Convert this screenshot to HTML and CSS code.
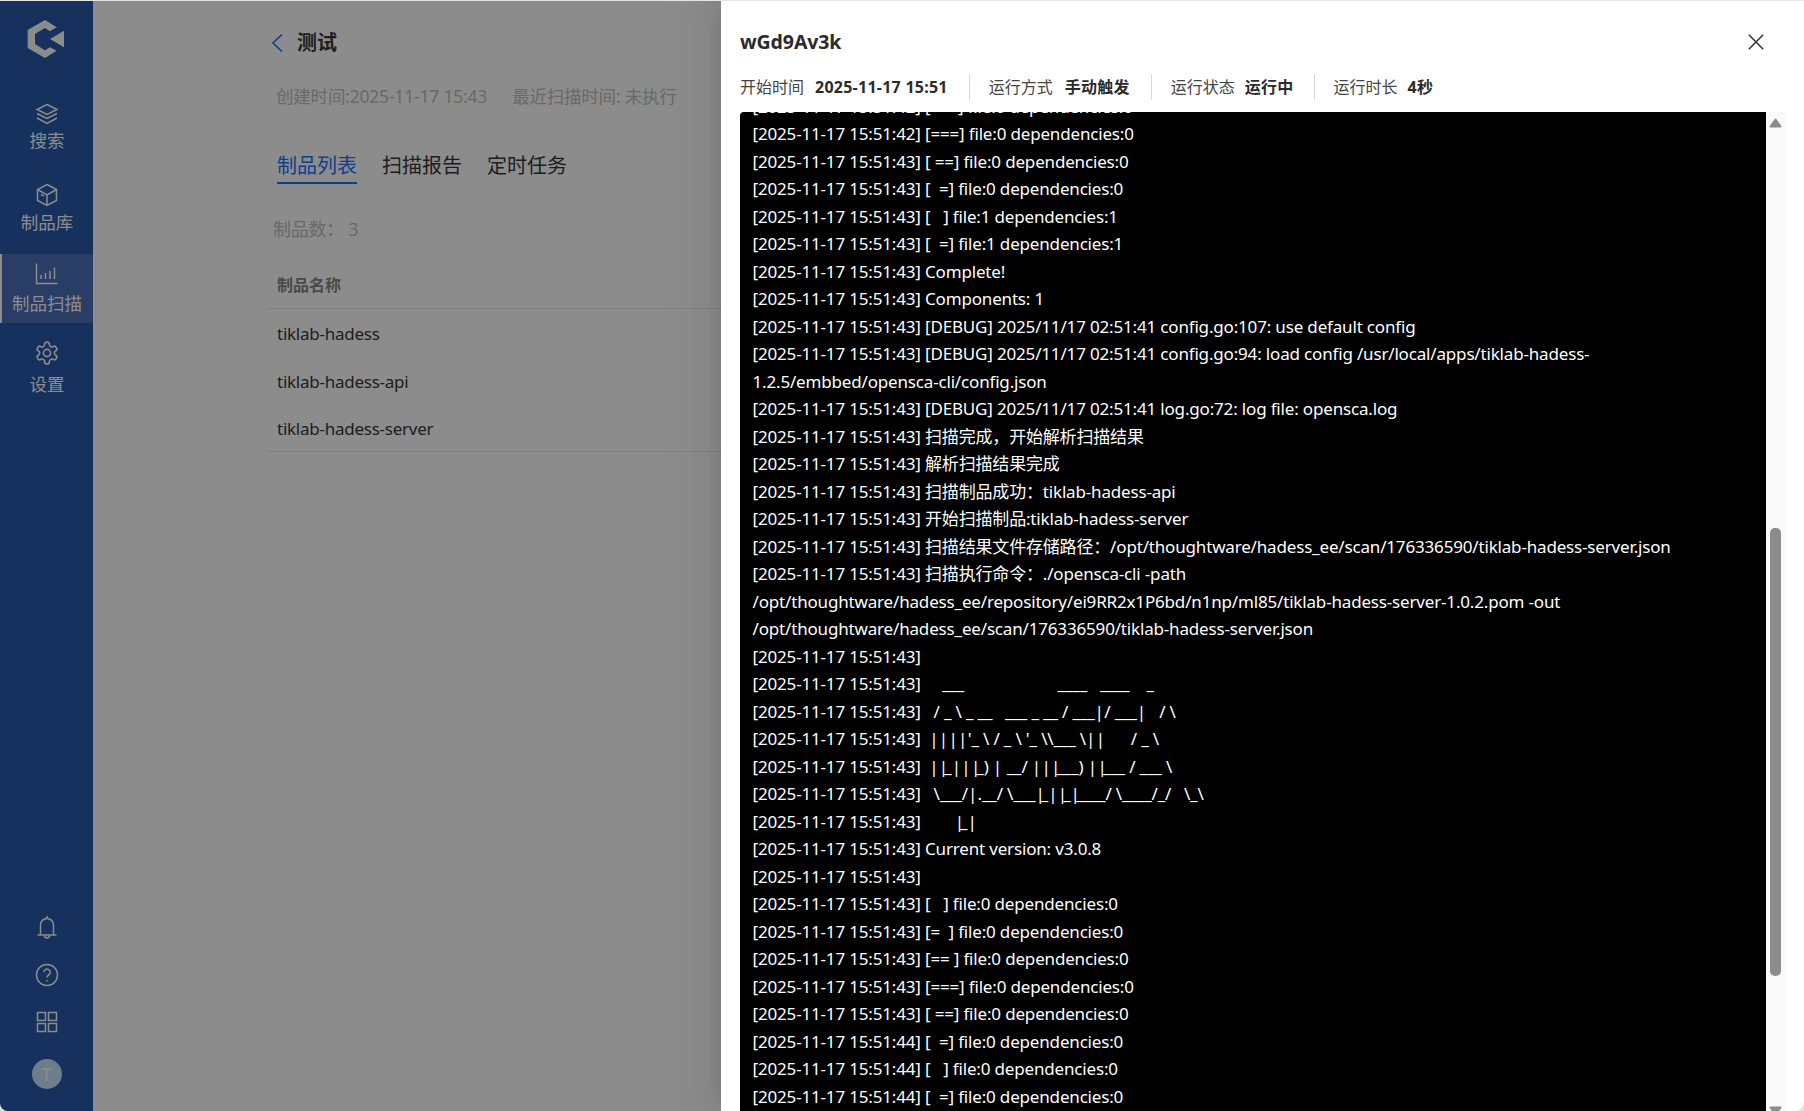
FILE: index.html
```html
<!DOCTYPE html>
<html lang="zh-CN">
<head>
<meta charset="utf-8">
<title>测试</title>
<link rel="stylesheet" href="styles.css">
</head>
<body>
<div class="app">
  <aside class="sidebar">
    <div class="logo">
      <svg viewBox="0 0 195 195" width="65" height="65"><path fill="#fff" d="M90 36 38 66v54l52 30 35-22-20-10-15 9-30-19V78l30-18 15 10 20-12z"/><path fill="#fff" d="M105 93 147 68v50z"/></svg>
    </div>
    <nav class="nav">
      <a class="nav-item nav-search">
        <svg class="ico" viewBox="0 0 24 24" width="24" height="24"><path d="M12 2.500 22 7.500 12 12.500 2 7.500z"/><path d="M2 11.500l10 5 10-5"/><path d="M2 16l10 5.500L22 16"/></svg>
        <span>搜索</span>
      </a>
      <a class="nav-item nav-lib">
        <svg class="ico" viewBox="0 0 24 24" width="24" height="24"><path d="M12 1.500 21.500 6.500v11L12 22.500 2.500 17.500v-11z"/><path d="M2.500 6.500 12 12l9.500-5.500"/><path d="M12 12v10.500"/><path d="M6 11.500l3 1.700"/></svg>
        <span>制品库</span>
      </a>
      <a class="nav-item nav-scan active">
        <svg class="ico" viewBox="0 0 24 24" width="24" height="24"><path d="M1.500 1.500v20h21"/><path d="M6 17v-4M10.500 17v-6M15 17V9M19.500 17V5.500"/></svg>
        <span>制品扫描</span>
      </a>
      <a class="nav-item nav-set">
        <svg class="ico" viewBox="0 0 24 24" width="26" height="26"><path d="M12.220 2h-.440a2 2 0 0 0-2 2v.180a2 2 0 0 1-1 1.730l-.430.250a2 2 0 0 1-2 0l-.150-.080a2 2 0 0 0-2.730.730l-.220.380a2 2 0 0 0 .730 2.730l.150.100a2 2 0 0 1 1 1.720v.510a2 2 0 0 1-1 1.740l-.150.090a2 2 0 0 0-.730 2.730l.220.380a2 2 0 0 0 2.730.730l.150-.080a2 2 0 0 1 2 0l.430.250a2 2 0 0 1 1 1.730V20a2 2 0 0 0 2 2h.440a2 2 0 0 0 2-2v-.180a2 2 0 0 1 1-1.730l.430-.250a2 2 0 0 1 2 0l.150.080a2 2 0 0 0 2.730-.730l.220-.390a2 2 0 0 0-.730-2.730l-.150-.080a2 2 0 0 1-1-1.740v-.500a2 2 0 0 1 1-1.740l.150-.090a2 2 0 0 0 .730-2.730l-.220-.380a2 2 0 0 0-2.730-.730l-.150.080a2 2 0 0 1-2 0l-.430-.250a2 2 0 0 1-1-1.730V4a2 2 0 0 0-2-2z"/><circle cx="12" cy="12" r="3.300"/></svg>
        <span>设置</span>
      </a>
    </nav>
    <div class="side-tools">
      <svg class="ico" viewBox="0 0 24 24" width="24" height="24"><path d="M12 1v2"/><path d="M5.500 20V10a6.500 6.500 0 0 1 13 0v10"/><path d="M2.500 20h19"/><path d="M9.500 20.500a2.500 2.500 0 0 0 5 0"/></svg>
      <svg class="ico" viewBox="0 0 24 24" width="24" height="24"><circle cx="12" cy="12" r="10.500"/><path d="M8.800 9.300a3.200 3.200 0 1 1 4.900 2.700c-1.100.7-1.700 1.300-1.700 2.600"/><path d="M12 17v1.500"/></svg>
      <svg class="ico" viewBox="0 0 24 24" width="24" height="24"><path d="M2.500 2.500h8v8h-8zM13.500 2.500h8v8h-8zM2.500 13.500h8v8h-8zM13.500 13.500h8v8h-8z"/></svg>
      <div class="avatar">T</div>
    </div>
  </aside>

  <main class="main">
    <div class="page-title">
      <svg class="back" viewBox="0 0 12 20" width="12" height="20"><path d="M11 1.500 2 10l9 8.500"/></svg>
      <h1>测试</h1>
    </div>
    <div class="meta"><span>创建时间:2025-11-17 15:43</span><span>最近扫描时间: 未执行</span></div>
    <div class="tabs">
      <a class="tab current">制品列表</a>
      <a class="tab">扫描报告</a>
      <a class="tab">定时任务</a>
    </div>
    <div class="count">制品数：&nbsp;3</div>
    <div class="table">
      <div class="th">制品名称</div>
      <div class="td">tiklab-hadess</div>
      <div class="td">tiklab-hadess-api</div>
      <div class="td last">tiklab-hadess-server</div>
    </div>
  </main>

  <div class="mask"></div>

  <section class="drawer">
    <header class="drawer-head">
      <h2>wGd9Av3k</h2>
      <svg class="close" viewBox="0 0 16 16" width="16" height="16"><path d="M.8.800l14.400 14.400M15.200.800.800 15.200"/></svg>
    </header>
    <div class="info">
      <div class="info-item info-first"><span>开始时间</span><b>2025-11-17 15:51</b></div>
      <div class="info-item info-wide"><span>运行方式</span><b>手动触发</b></div>
      <div class="info-item info-tight"><span>运行状态</span><b>运行中</b></div>
      <div class="info-item"><span>运行时长</span><b>4秒</b></div>
    </div>
    <div class="log-wrap">
      <div class="log">
        <div class="log-lines">
          <div>[2025-11-17 15:51:42] [==  ] file:0 dependencies:0</div>
          <div>[2025-11-17 15:51:42] [===] file:0 dependencies:0</div>
          <div>[2025-11-17 15:51:43] [ ==] file:0 dependencies:0</div>
          <div>[2025-11-17 15:51:43] [  =] file:0 dependencies:0</div>
          <div>[2025-11-17 15:51:43] [   ] file:1 dependencies:1</div>
          <div>[2025-11-17 15:51:43] [  =] file:1 dependencies:1</div>
          <div>[2025-11-17 15:51:43] Complete!</div>
          <div>[2025-11-17 15:51:43] Components: 1</div>
          <div>[2025-11-17 15:51:43] [DEBUG] 2025/11/17 02:51:41 config.go:107: use default config</div>
          <div>[2025-11-17 15:51:43] [DEBUG] 2025/11/17 02:51:41 config.go:94: load config /usr/local/apps/tiklab-hadess-</div>
          <div>1.2.5/embbed/opensca-cli/config.json</div>
          <div>[2025-11-17 15:51:43] [DEBUG] 2025/11/17 02:51:41 log.go:72: log file: opensca.log</div>
          <div>[2025-11-17 15:51:43] 扫描完成，开始解析扫描结果</div>
          <div>[2025-11-17 15:51:43] 解析扫描结果完成</div>
          <div>[2025-11-17 15:51:43] 扫描制品成功：tiklab-hadess-api</div>
          <div>[2025-11-17 15:51:43] 开始扫描制品:tiklab-hadess-server</div>
          <div>[2025-11-17 15:51:43] 扫描结果文件存储路径：/opt/thoughtware/hadess_ee/scan/176336590/tiklab-hadess-server.json</div>
          <div>[2025-11-17 15:51:43] 扫描执行命令：./opensca-cli -path</div>
          <div>/opt/thoughtware/hadess_ee/repository/ei9RR2x1P6bd/n1np/ml85/tiklab-hadess-server-1.0.2.pom -out</div>
          <div>/opt/thoughtware/hadess_ee/scan/176336590/tiklab-hadess-server.json</div>
          <div>[2025-11-17 15:51:43]</div>
          <div>[2025-11-17 15:51:43]     ___                      ____   ____    _</div>
          <div>[2025-11-17 15:51:43]   / _ \ _ __   ___ _ __ / ___<i class="pipe">|</i> / ___<i class="pipe">|</i>    / \</div>
          <div>[2025-11-17 15:51:43]  <i class="pipe">|</i> <i class="pipe">|</i> <i class="pipe">|</i> <i class="pipe">|</i> '_ \ / _ \ '_ \\___ \<i class="pipe">|</i> <i class="pipe">|</i>       / _ \</div>
          <div>[2025-11-17 15:51:43]  <i class="pipe">|</i> <i class="pipe">|</i>_<i class="pipe">|</i> <i class="pipe">|</i> <i class="pipe">|</i>_) <i class="pipe">|</i>  __/ <i class="pipe">|</i> <i class="pipe">|</i> <i class="pipe">|</i>___) <i class="pipe">|</i> <i class="pipe">|</i>___ / ___ \</div>
          <div>[2025-11-17 15:51:43]   \___/<i class="pipe">|</i> .__/ \___<i class="pipe">|</i>_<i class="pipe">|</i> <i class="pipe">|</i>_<i class="pipe">|</i>____/ \____/_/   \_\</div>
          <div>[2025-11-17 15:51:43]        <i class="pipe">|</i>_<i class="pipe">|</i></div>
          <div>[2025-11-17 15:51:43] Current version: v3.0.8</div>
          <div>[2025-11-17 15:51:43]</div>
          <div>[2025-11-17 15:51:43] [   ] file:0 dependencies:0</div>
          <div>[2025-11-17 15:51:43] [=  ] file:0 dependencies:0</div>
          <div>[2025-11-17 15:51:43] [== ] file:0 dependencies:0</div>
          <div>[2025-11-17 15:51:43] [===] file:0 dependencies:0</div>
          <div>[2025-11-17 15:51:43] [ ==] file:0 dependencies:0</div>
          <div>[2025-11-17 15:51:44] [  =] file:0 dependencies:0</div>
          <div>[2025-11-17 15:51:44] [   ] file:0 dependencies:0</div>
          <div>[2025-11-17 15:51:44] [  =] file:0 dependencies:0</div>
        </div>
      </div>
      <div class="scrollbar">
        <svg class="arrow arrow-up" viewBox="0 0 13 10" width="13" height="10"><path d="M6.500 1.500 11.500 8.500H1.500z"/></svg>
        <i class="thumb"></i>
        <svg class="arrow arrow-down" viewBox="0 0 13 10" width="13" height="10"><path d="M1.500 1.500H11.500L6.500 8.500z"/></svg>
      </div>
    </div>
  </section>
</div>
</body>
</html>
```
FILE: styles.css
```css
* { box-sizing: border-box; }
html, body { margin: 0; height: 100%; overflow: hidden; }
body {
  background: #e6e6e6;
  font-family: "Noto Sans", "Noto Sans CJK SC", sans-serif;
  color: #383838;
}
h1, h2 { margin: 0; }
.app {
  position: relative;
  display: flex;
  height: 1110px;
  margin-top: 1px;
  overflow: hidden;
  background: #fff;
  border-radius: 0 0 8px 8px;
}
.sidebar {
  flex: 0 0 93px;
  display: flex;
  flex-direction: column;
  align-items: center;
  background: #2859ab;
  color: #fff;
}
.logo { height: 93px; width: 100%; display: flex; justify-content: center; padding: 7px 1px 0 0; }
.logo svg { display: block; margin-left: 2px; }
.ico { display: block; fill: none; stroke: #fff; stroke-width: 1.5; flex: none; }
.nav { width: 100%; display: flex; flex-direction: column; gap: 11px; }
.nav-item {
  height: 69px;
  padding-left: 1px;
  display: flex;
  flex-direction: column;
  align-items: center;
  font-size: 17.500px;
  line-height: 26px;
}
.nav-search { padding-top: 8px; gap: 1px; }
.nav-lib { padding-top: 9px; gap: 2px; }
.nav-scan { padding-top: 8px; gap: 4px; }
.nav-set { padding-top: 6px; gap: 5px; }
.nav-item.active { background: #4c6fb9; box-shadow: inset 2px 0 0 #fff; }
.side-tools {
  margin-top: auto;
  padding-bottom: 22px;
  display: flex;
  flex-direction: column;
  align-items: center;
  gap: 23.500px;
}
.avatar {
  width: 30px;
  height: 30px;
  margin-top: 1.500px;
  border-radius: 50%;
  background: #c9e4ff;
  color: #fff;
  font-size: 18px;
  line-height: 30px;
  text-align: center;
}
.main { flex: 1; padding: 26px 0 0 174px; min-width: 0; }
.page-title { display: flex; align-items: center; gap: 14px; height: 32px; padding-left: 4px; }
.back { fill: none; stroke: #1b72ff; stroke-width: 1.6; flex: none; }
.page-title h1 { font-size: 20px; font-weight: 700; color: #383838; line-height: 32px; }
.meta {
  display: flex;
  gap: 25px;
  margin-top: 23px;
  padding-left: 9px;
  color: #c0c0c0;
  font-size: 17.500px;
  letter-spacing: -.2px;
  line-height: 28px;
}
.tabs { display: flex; gap: 25px; margin-top: 40px; padding-left: 10px; height: 38px; }
.tab { font-size: 20px; line-height: 32px; height: 34px; color: #383838; }
.tab.current { color: #1b72ff; border-bottom: 2px solid #1b72ff; }
.count { margin-top: 27px; padding-left: 6px; font-size: 18px; line-height: 28px; color: #c0c0c0; letter-spacing: -.3px; }
.table { margin-top: 20px; }
.th {
  height: 46px;
  padding: 10px 0 0 10px;
  font-size: 16px;
  line-height: 24px;
  font-weight: 700;
  color: #868686;
  border-bottom: 1px solid #e8e8e8;
}
.td {
  height: 47.500px;
  padding-left: 10px;
  font-size: 17px;
  letter-spacing: -.25px;
  line-height: 49px;
  color: #383838;
}
.td.last { border-bottom: 1px solid #e8e8e8; }
.mask { position: absolute; inset: 0; background: rgba(0, 0, 0, .45); }
.drawer {
  position: absolute;
  top: 0;
  bottom: 0;
  left: 721px;
  right: 0;
  display: flex;
  flex-direction: column;
  background: #fff;
  padding-left: 19px;
  box-shadow: -6px 0 16px -8px rgba(0, 0, 0, .08), -9px 0 28px rgba(0, 0, 0, .05), -12px 0 48px 16px rgba(0, 0, 0, .03);
}
.drawer-head {
  display: flex;
  justify-content: space-between;
  align-items: flex-start;
  height: 67px;
  padding: 26px 40px 0 0;
}
.drawer-head h2 { font-size: 19.500px; line-height: 30px; font-weight: 700; color: #2b2b2b; letter-spacing: -.1px; }
.close { fill: none; stroke: #333; stroke-width: 1.5; margin-top: 7px; }
.info { display: flex; height: 38px; margin-bottom: 6px; align-items: center; }
.info-item {
  display: flex;
  align-items: center;
  gap: 10px;
  height: 26px;
  padding-right: 21px;
  margin-right: 19px;
  border-right: 1px solid #d9d9d9;
  font-size: 16px;
  line-height: 20px;
}
.info-first { gap: 11px; }
.info-wide { gap: 12px; }
.info-tight { padding-right: 20px; }
.info-item:last-child { border-right: 0; }
.info-item span { color: #444; }
.info-item b { font-weight: 700; color: #2b2b2b; letter-spacing: .25px; }
.log-wrap { flex: 1; min-height: 0; display: flex; padding-right: 19px; }
.log {
  flex: 1;
  min-width: 0;
  background: #000;
  color: #fff;
  overflow: hidden;
  border-top-left-radius: 4px;
  padding-left: 12.500px;
  font-size: 17px;
  letter-spacing: -.17px;
  line-height: 27.500px;
}
.log-lines { margin-top: -19.500px; }
.log-lines div { white-space: pre; }
.pipe { font-style: normal; letter-spacing: -4px; }
.scrollbar {
  flex: 0 0 19px;
  display: flex;
  flex-direction: column;
  align-items: center;
  background: #fafafa;
}
.arrow { display: block; flex: none; fill: #8c8c8c; stroke: #8c8c8c; stroke-width: 2; stroke-linejoin: round; }
.arrow-up { margin-top: 6px; }
.thumb { display: block; flex: none; width: 11px; height: 448px; margin-top: 400px; border-radius: 5px; background: #8c8c8c; }
.arrow-down { margin-top: 130px; }
```
